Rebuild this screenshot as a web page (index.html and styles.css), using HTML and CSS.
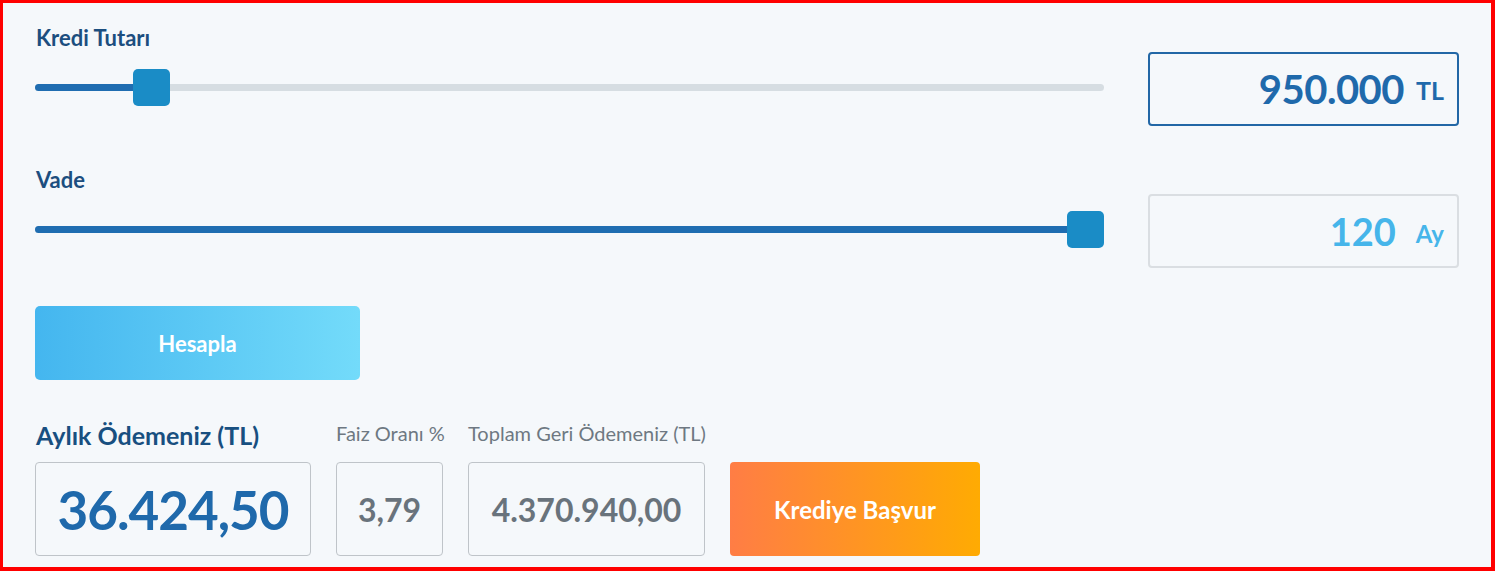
FILE: index.html
```html
<!DOCTYPE html>
<html lang="tr">
<head>
    <meta charset="UTF-8">
    <meta name="viewport" content="width=device-width, initial-scale=1.0">
    <title>Kredi Hesaplama</title>
    <link rel="stylesheet" href="styles.css">
</head>
<body>
    <div class="calc">
        <div class="field field-first">
            <div class="field-label">Kredi Tutarı</div>
            <div class="slider" style="--pos: 0.095">
                <div class="slider-track"><div class="slider-fill"></div></div>
                <div class="slider-thumb"></div>
            </div>
            <div class="value-box active">
                <span class="value">950.000</span>
                <span class="unit">TL</span>
            </div>
        </div>

        <div class="field">
            <div class="field-label">Vade</div>
            <div class="slider" style="--pos: 1">
                <div class="slider-track"><div class="slider-fill"></div></div>
                <div class="slider-thumb"></div>
            </div>
            <div class="value-box">
                <span class="value">120</span>
                <span class="unit unit-month">Ay</span>
            </div>
        </div>

        <button class="btn-calc">Hesapla</button>

        <div class="results">
            <div class="result-label main">Aylık Ödemeniz (TL)</div>
            <div class="result-label">Faiz Oranı %</div>
            <div class="result-label">Toplam Geri Ödemeniz (TL)</div>
            <div></div>

            <div class="result-box main">36.424,50</div>
            <div class="result-box">3,79</div>
            <div class="result-box">4.370.940,00</div>
            <button class="btn-apply">Krediye Başvur</button>
        </div>
    </div>
</body>
</html>
```

FILE: styles.css
```css
* {
    box-sizing: border-box;
    margin: 0;
    padding: 0;
}

body {
    font-family: "Lato", "Open Sans", sans-serif;
    background-color: #fff;
}

.calc {
    height: 571px;
    overflow: hidden;
    border: solid #ff0000;
    border-width: 3px 4px 4px 3px;
    background-color: #f5f8fb;
    padding: 23px 32px 0 32px;
}

.field {
    display: grid;
    grid-template-columns: 1fr 311px;
    grid-template-rows: 24px 74px;
    column-gap: 44px;
    row-gap: 2px;
    margin-top: 42px;
}

.field-first {
    margin-top: 0;
}

.field-label {
    font-size: 22px;
    line-height: 24px;
    font-weight: 700;
    color: #1c4e7f;
    padding-left: 1px;
}

.slider {
    grid-column: 1;
    grid-row: 2;
    align-self: center;
    position: relative;
    height: 37px;
    margin-bottom: 4px;
    display: flex;
    align-items: center;
}

.field-first .slider {
    margin-bottom: 3px;
}

.slider-track {
    width: 100%;
    height: 7px;
    border-radius: 4px;
    background-color: #d6dde2;
    overflow: hidden;
}

.slider-fill {
    height: 100%;
    width: calc(var(--pos) * (100% - 37px) + 18px);
    background-color: #1f6db1;
}

.slider-thumb {
    position: absolute;
    top: 0;
    left: calc(var(--pos) * (100% - 37px));
    width: 37px;
    height: 37px;
    border-radius: 5px;
    background-color: #1a8cc6;
}

.value-box {
    grid-column: 2;
    grid-row: 2;
    display: flex;
    align-items: center;
    justify-content: flex-end;
    border: 2px solid #dadee2;
    border-radius: 4px;
    padding-right: 13px;
    color: #46b5ea;
}

.value-box.active {
    border-color: #2267a6;
    color: #1f69ab;
}

.value {
    font-size: 38px;
    line-height: 1;
    font-weight: 700;
}

.active .value {
    font-size: 40px;
    letter-spacing: -0.5px;
}

.unit {
    font-size: 25px;
    line-height: 1;
    font-weight: 700;
    margin-left: 12px;
    margin-top: 2px;
}

.unit-month {
    font-size: 24px;
    margin-left: 20px;
    margin-top: 6px;
}

.btn-calc {
    display: block;
    width: 325px;
    height: 74px;
    margin-top: 38px;
    border: none;
    border-radius: 5px;
    background: linear-gradient(to right, #44b6ef, #73dbfa);
    color: #fff;
    font-family: inherit;
    font-size: 22px;
    font-weight: 700;
    cursor: pointer;
}

.results {
    display: grid;
    grid-template-columns: 276px 107px 237px 250px;
    grid-template-rows: 30px 94px;
    column-gap: 25px;
    row-gap: 12px;
    margin-top: 40px;
}

.result-label {
    align-self: end;
    font-size: 20px;
    line-height: 24px;
    color: #6e7882;
    white-space: nowrap;
    margin-bottom: 5px;
}

.result-label.main {
    font-size: 25px;
    line-height: 30px;
    font-weight: 700;
    color: #184f80;
    padding-left: 1px;
    margin-bottom: 0;
}

.result-box {
    display: flex;
    align-items: center;
    justify-content: center;
    border: 1px solid #bfc4c9;
    border-radius: 4px;
    font-size: 32px;
    font-weight: 700;
    color: #69737c;
}

.result-box.main {
    font-size: 53px;
    letter-spacing: -1px;
    color: #1f69ab;
}

.btn-apply {
    border: none;
    border-radius: 4px;
    background: linear-gradient(to right, #ff7d45, #ffab02);
    color: #fff;
    font-family: inherit;
    font-size: 24px;
    font-weight: 700;
    cursor: pointer;
}
```
